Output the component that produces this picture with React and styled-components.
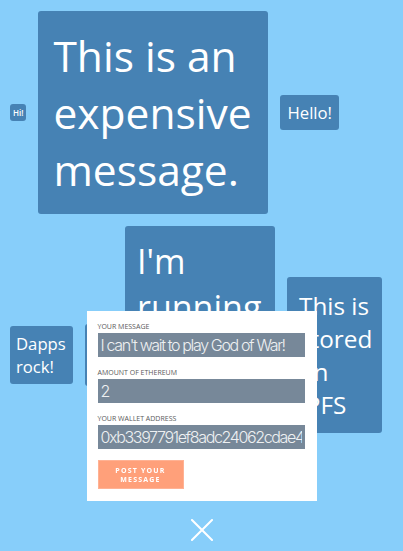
import React from 'react';
import styled, { createGlobalStyle } from 'styled-components';

const GlobalStyle = createGlobalStyle`
  html, body {
    margin: 0;
    padding: 0;
    background: #87cefa;
    font-family: "Open Sans", "Liberation Sans", sans-serif;
  }
  * {
    box-sizing: border-box;
  }
`

const Board = styled.div`
  display: flex;
  flex-wrap: wrap;
  align-items: center;
  align-content: flex-start;
  gap: 12px;
  padding: 11px 10px;
  min-height: 551px;
`

const Message = styled.div`
  flex: 0 0 auto;
  width: ${props => props.$w ? `${props.$w}px` : 'auto'};
  min-height: ${props => props.$minH ? `${props.$minH}px` : '0'};
  padding: ${props => props.$pad};
  background: #4682b4;
  border-radius: 3px;
  color: #fff;
  font-size: ${props => props.$size}px;
  font-weight: ${props => props.$bold ? 600 : 400};
  line-height: normal;
  overflow: hidden;
`

const Overlay = styled.div`
  position: fixed;
  inset: 0;
  display: flex;
  flex-direction: column;
  align-items: center;
  justify-content: flex-end;
  gap: 18px;
  padding-bottom: 10px;
`

const Modal = styled.form`
  width: 230px;
  background: #fff;
  padding: 11px 12px 12px 11px;
`

const Field = styled.div`
  margin-bottom: 11px;
`

const Label = styled.label`
  display: block;
  height: 10px;
  margin-bottom: 1px;
  font-size: 7px;
  line-height: 10px;
  color: #5a5a5a;
  text-transform: uppercase;
`

const Input = styled.input`
  display: block;
  width: 100%;
  height: 24px;
  border: 0;
  outline: none;
  padding: 0 3px;
  background: #778899;
  color: #eef0f2;
  font-family: Inter, "Liberation Sans", sans-serif;
  font-weight: 300;
  font-size: 16px;
  letter-spacing: -1.35px;
`

const PostButton = styled.button`
  display: flex;
  align-items: center;
  justify-content: center;
  width: 86px;
  height: 29px;
  padding: 0 12px;
  border: 1px solid #ffb294;
  background: #ffa07a;
  color: #fff;
  font-family: "Open Sans", sans-serif;
  font-weight: 700;
  font-size: 7px;
  line-height: 9px;
  letter-spacing: 1.2px;
  text-align: center;
`

const Close = styled.button`
  width: 22px;
  height: 22px;
  padding: 0;
  border: 0;
  background: none;
  display: flex;
`

const messages = [
  { text: 'Hi!', size: 8, pad: '3px', bold: true },
  { text: 'This is an expensive message.', size: 42.5, pad: '16px 15px', w: 230 },
  { text: 'Hello!', size: 16.7, pad: '6px 7px' },
  { text: 'Dapps rock!', size: 16.7, pad: '6px 6px', w: 63 },
  { text: 'Yo yo', size: 16.7, pad: '8px 6px', w: 28 },
  { text: "I'm running out of ether!", size: 34, pad: '12px', w: 150, minH: 258 },
  { text: 'This is stored on IPFS', size: 24.3, pad: '12px', w: 95 },
]

const App = () => {
  return (
    <>
      <GlobalStyle />
      <Board>
        {messages.map((m, i) => (
          <Message key={i} $size={m.size} $pad={m.pad} $w={m.w} $minH={m.minH} $bold={m.bold}>
            {m.text}
          </Message>
        ))}
      </Board>
      <Overlay>
        <Modal onSubmit={e => e.preventDefault()}>
          <Field>
            <Label>Your message</Label>
            <Input type="text" defaultValue="I can't wait to play God of War!" />
          </Field>
          <Field>
            <Label>Amount of Ethereum</Label>
            <Input type="text" defaultValue="2" />
          </Field>
          <Field>
            <Label>Your wallet address</Label>
            <Input type="text" defaultValue="0xb3397791ef8adc24062cdae4b1a2f3e90c7d15aa" />
          </Field>
          <PostButton type="submit">POST YOUR MESSAGE</PostButton>
        </Modal>
        <Close type="button" aria-label="close">
          <svg width="22" height="22" viewBox="0 0 22 22">
            <path d="M1 1 L21 21 M21 1 L1 21" stroke="#fff" strokeWidth="2" strokeLinecap="square" />
          </svg>
        </Close>
      </Overlay>
    </>
  )
}

export default App;
